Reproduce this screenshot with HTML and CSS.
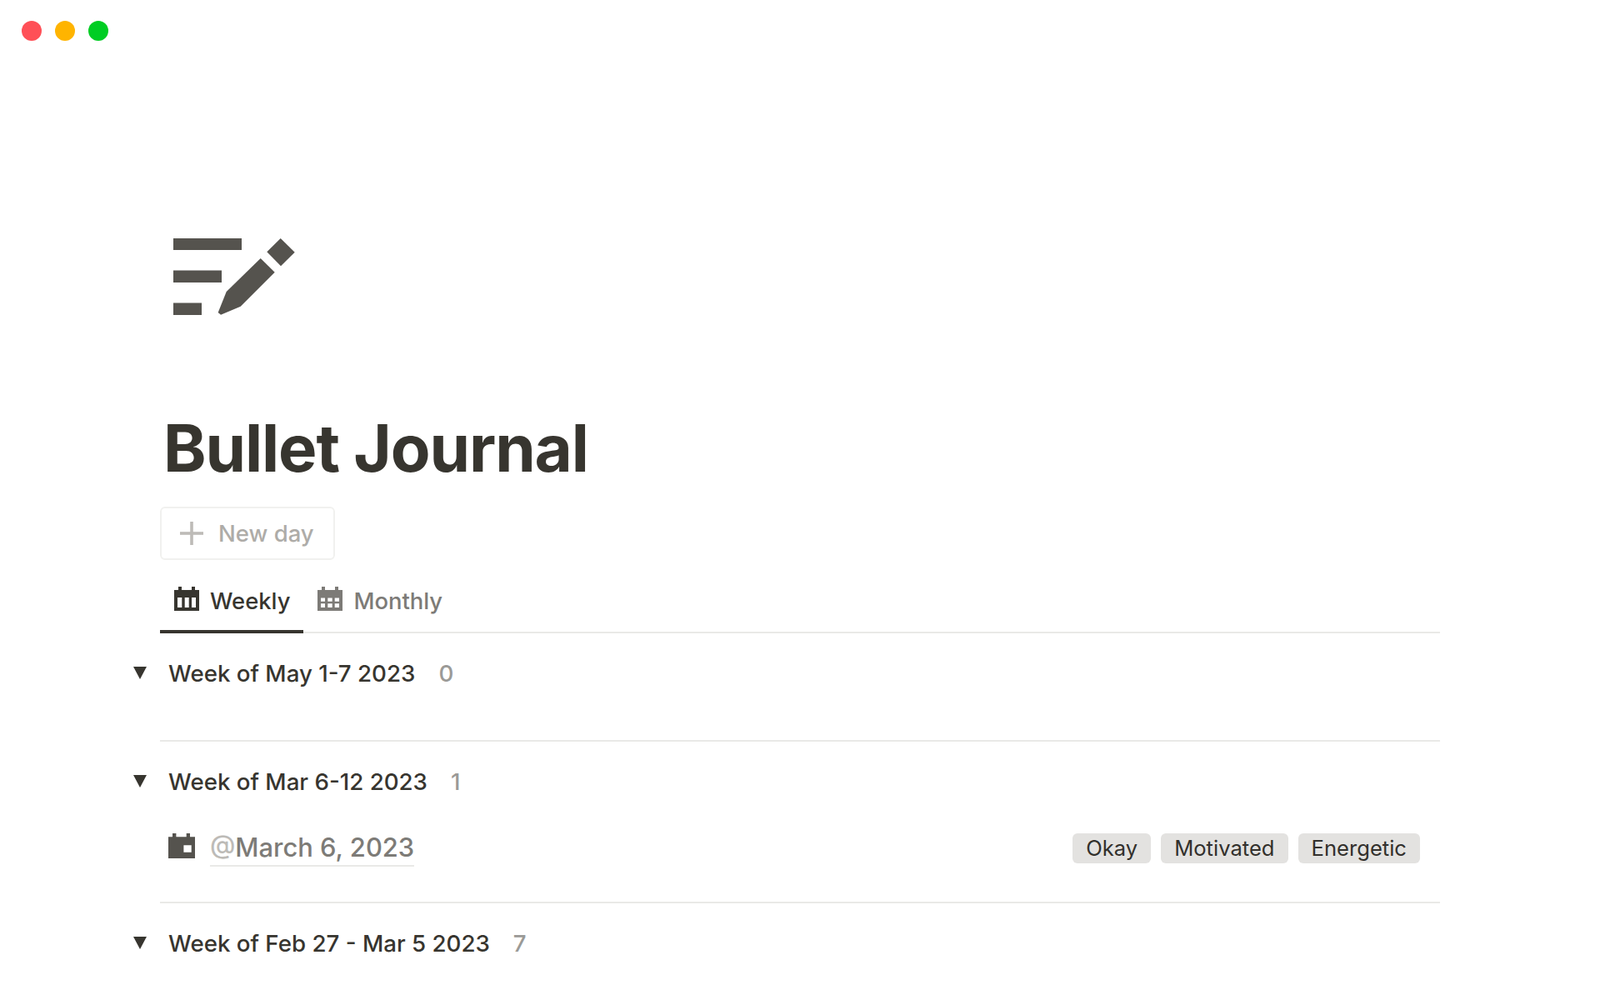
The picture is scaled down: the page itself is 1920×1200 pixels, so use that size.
FILE: index.html
```html
<!DOCTYPE html>
<html>
<head>
    <title>Bullet Journal</title>
    <meta name="viewport" content="width=device-width, initial-scale=1.0">
    <link rel="stylesheet" href="styles.css">
</head>
<body>
    <div class="window-bar">
        <span class="dot dot-red"></span>
        <span class="dot dot-yellow"></span>
        <span class="dot dot-green"></span>
    </div>

    <div class="page">
        <svg class="page-icon" width="160" height="120" viewBox="0 0 160 120">
            <rect x="8" y="16" width="82" height="14"/>
            <rect x="8" y="54.5" width="58" height="14.5"/>
            <rect x="8" y="93.5" width="34" height="14.5"/>
            <polygon points="61.7,105 71.7,80 112.7,40 129.7,56.7 88.7,97.7 65,107.7"/>
            <polygon points="136.7,16 153.7,32.7 137,49.3 120.3,32.3"/>
        </svg>

        <h1>Bullet Journal</h1>

        <div class="new-button">
            <svg width="28" height="28" viewBox="0 0 28 28">
                <rect x="12.2" y="0" width="3.6" height="28"/>
                <rect x="0" y="12.2" width="28" height="3.6"/>
            </svg>
            <span>New day</span>
        </div>

        <div class="tabs">
            <div class="tab active">
                <svg width="30" height="29" viewBox="0 0 30 29">
                    <path d="M0 4h5V0h4v4h12V0h4v4h5v25H0z M4 13v12h5.3V13z M12.7 13v12h5V13z M21 13v12h5V13z" fill-rule="evenodd"/>
                </svg>
                <span>Weekly</span>
            </div>
            <div class="tab">
                <svg width="30" height="29" viewBox="0 0 30 29">
                    <path d="M0 4h5V0h4v4h12V0h4v4h5v25H0z M4 13.5v4.2h5v-4.2z M12.3 13.5v4.2h5.4v-4.2z M20.7 13.5v4.2h5.3v-4.2z M4 20.3V25h5v-4.7z M12.3 20.3V25h5.4v-4.7z M20.7 20.3V25h5.3v-4.7z" fill-rule="evenodd"/>
                </svg>
                <span>Monthly</span>
            </div>
        </div>

        <section class="group empty">
            <div class="group-head">
                <span class="caret"></span>
                <span class="group-name">Week of May 1-7 2023</span>
                <span class="group-count">0</span>
            </div>
        </section>

        <section class="group">
            <div class="group-head">
                <span class="caret"></span>
                <span class="group-name">Week of Mar 6-12 2023</span>
                <span class="group-count">1</span>
            </div>
            <div class="entry">
                <svg width="32" height="30" viewBox="0 0 32 30">
                    <path d="M0 4.3h5V0h4.4v4.3h12.3V0H26v4.3h6V30H0z M18.4 14.3v8.4h9.3v-8.4z" fill-rule="evenodd"/>
                </svg>
                <span class="entry-date"><span class="at">@</span>March 6, 2023</span>
                <div class="tags">
                    <span class="tag">Okay</span>
                    <span class="tag">Motivated</span>
                    <span class="tag">Energetic</span>
                </div>
            </div>
        </section>

        <section class="group last">
            <div class="group-head">
                <span class="caret"></span>
                <span class="group-name">Week of Feb 27 - Mar 5 2023</span>
                <span class="group-count">7</span>
            </div>
        </section>
    </div>
</body>
</html>
```

FILE: styles.css
```css
html, body {
    margin: 0;
    height: 100%;
    overflow: hidden;
}
body {
    font-family: Inter, "Liberation Sans", sans-serif;
    color: #37352f;
    background: white;
}
.window-bar {
    display: flex;
    gap: 16px;
    padding: 25px 26px 0;
    height: 24px;
}
.dot {
    width: 24px;
    height: 24px;
    border-radius: 50%;
}
.dot-red { background: #ff5057; }
.dot-yellow { background: #ffb400; }
.dot-green { background: #00cd23; }

.page { padding: 221px 192px 0; }
.page-icon {
    display: block;
    margin-left: 8px;
    fill: #55534e;
}
h1 {
    margin: 101px 0 0 4px;
    font-size: 78px;
    line-height: 94px;
    font-weight: 700;
    letter-spacing: -1.1px;
    color: #37352f;
}

.new-button {
    display: inline-flex;
    align-items: center;
    gap: 18px;
    box-sizing: border-box;
    width: 210px;
    height: 64px;
    margin-top: 23px;
    padding-left: 22px;
    border: 2px solid #f1f1ef;
    border-radius: 6px;
    font-size: 27.5px;
    font-weight: 500;
    color: #aeaca8;
    fill: #bdbbb7;
}
.tabs {
    display: flex;
    margin-top: 18px;
    border-bottom: 2px solid #e9e9e7;
}
.tab {
    display: flex;
    align-items: center;
    gap: 13px;
    box-sizing: border-box;
    height: 68px;
    padding: 0 16px 6px 17px;
    font-size: 27.4px;
    font-weight: 500;
    color: #7d7b77;
    fill: #7d7b77;
}
.tab svg { margin-top: -5px; }
.tab.active {
    color: #37352f;
    fill: #37352f;
    height: 70px;
    margin-bottom: -2px;
    padding-bottom: 4px;
    border-bottom: 4px solid #37352f;
}

.group {
    border-bottom: 2px solid #e9e9e7;
    padding-bottom: 25px;
}
.group.empty { height: 105px; padding-bottom: 0; }
.group.last { border-bottom: none; }
.group-head {
    display: flex;
    align-items: center;
    height: 50px;
    margin-top: 23px;
    margin-left: -32px;
    font-size: 27.7px;
    font-weight: 500;
}
.caret {
    width: 0;
    height: 0;
    margin-right: 26px;
    margin-top: -2px;
    border-left: 8px solid transparent;
    border-right: 8px solid transparent;
    border-top: 15px solid #37352f;
}
.group-count {
    margin-left: 28px;
    color: #9b9a97;
}
.entry {
    display: flex;
    align-items: center;
    height: 79px;
    margin-top: 15px;
    padding: 0 24px 0 10px;
}
.entry svg {
    fill: #55534e;
    margin-right: 18px;
    margin-top: -6px;
}
.entry-date {
    font-size: 30.9px;
    font-weight: 500;
    line-height: 42px;
    color: #7d7b77;
    border-bottom: 2px solid #e9e9e7;
}
.at { color: #bdbbb7; }
.tags {
    display: flex;
    gap: 12px;
    margin-left: auto;
}
.tag {
    height: 36px;
    line-height: 36px;
    padding: 0 16px;
    border-radius: 6px;
    background: #e3e2e0;
    font-size: 25.6px;
    color: #32302c;
}
```
